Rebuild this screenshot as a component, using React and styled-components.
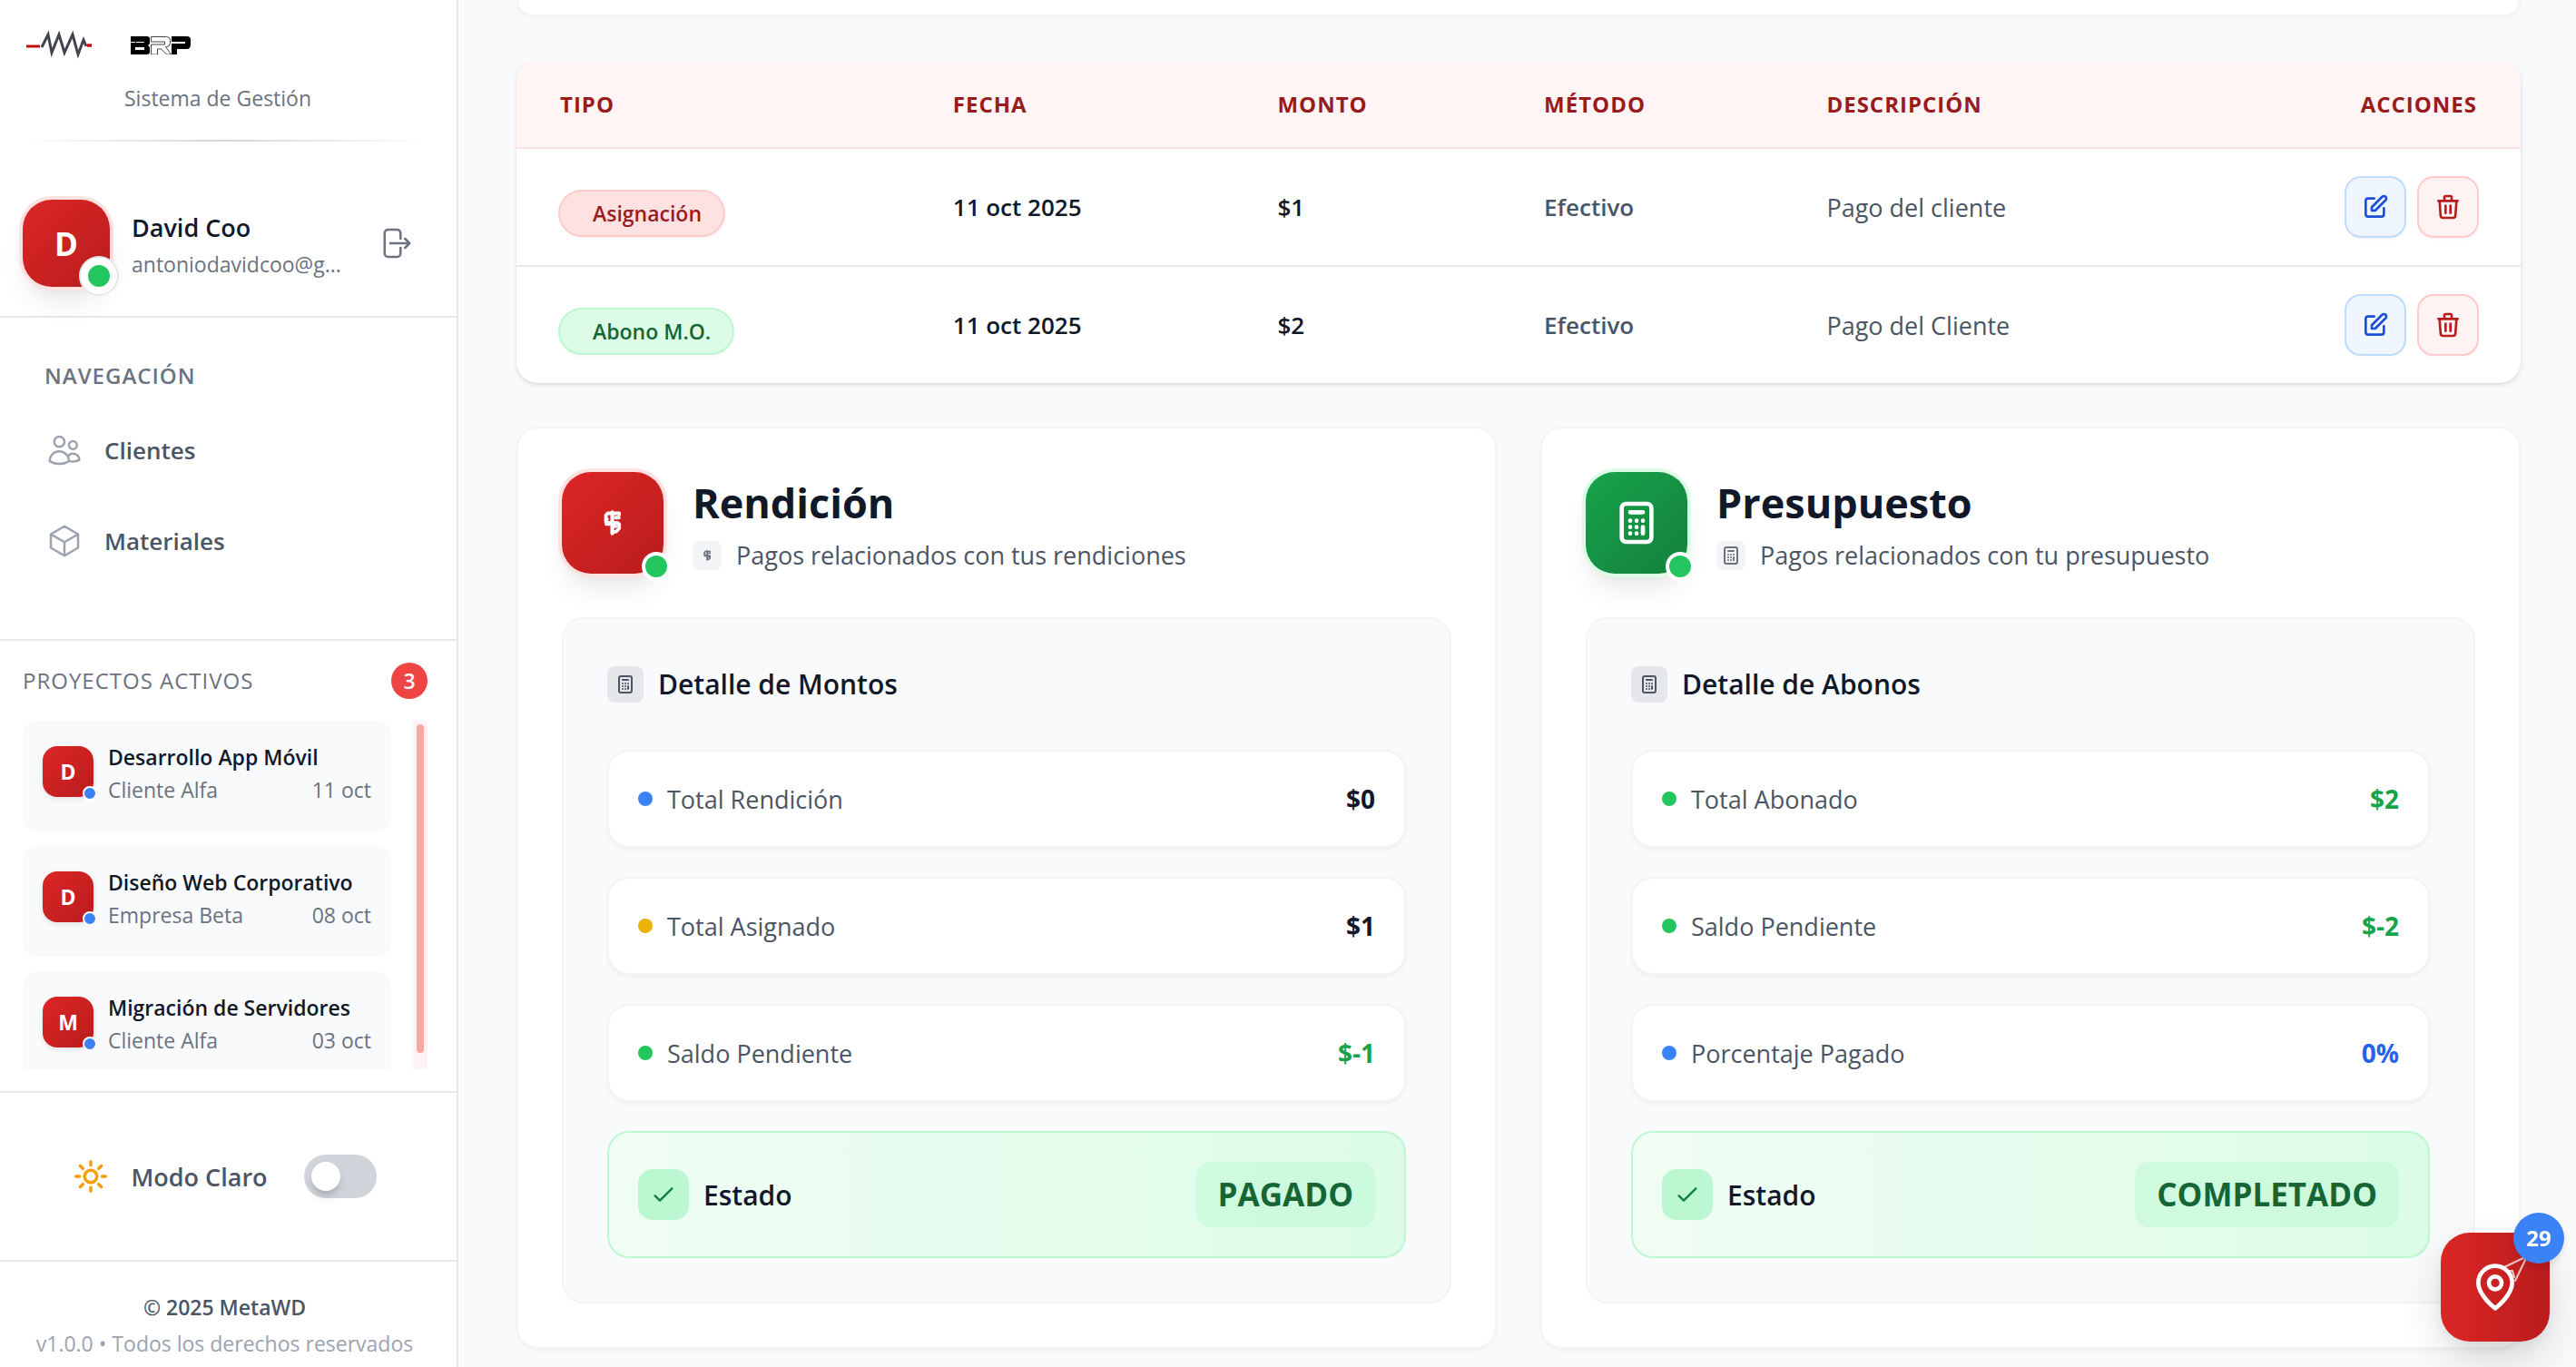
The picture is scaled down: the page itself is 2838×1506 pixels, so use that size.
import React from 'react';
import styled, { createGlobalStyle } from 'styled-components';

const Global = createGlobalStyle`
  *, *::before, *::after { box-sizing: border-box; }
  body {
    margin: 0;
    background: #f9fafc;
    font-family: 'Segoe UI', 'Open Sans', 'Noto Sans', sans-serif;
    color: #111827;
  }
  h1, h2, h3, p { margin: 0; }
  button { font: inherit; cursor: pointer; }
`;

/* ---------- shell ---------- */

const Shell = styled.div`
  display: flex;
  min-height: 100vh;
`;

const Sidebar = styled.aside`
  flex: 0 0 505px;
  min-width: 0;
  display: flex;
  flex-direction: column;
  background: #fff;
  border-right: 2px solid #e5e7eb;
`;

const Main = styled.main`
  flex: 1;
  min-width: 0;
  display: flex;
  flex-direction: column;
  gap: 48px;
  padding: 0 61px 20px 64px;
`;

/* ---------- sidebar ---------- */

const Brand = styled.header`
  padding: 24px 32px 0 25px;
`;

const BrandRow = styled.div`
  display: flex;
  gap: 32px;
`;

const BrandName = styled.div`
  display: flex;
  flex-direction: column;
  gap: 32px;
`;

const BrandText = styled.p`
  font-size: 23px;
  line-height: 32px;
  color: #6b7280;
`;

const FadeLine = styled.div`
  height: 2px;
  margin-top: 30px;
  background: linear-gradient(90deg, transparent, #d1d5db, transparent);
`;

const UserSection = styled.section`
  display: flex;
  align-items: center;
  gap: 24px;
  padding: 64px 36px 32px 25px;
  border-bottom: 2px solid #e5e7eb;
`;

const Tile = styled.div`
  position: relative;
  flex: none;
  display: grid;
  place-items: center;
  width: ${(p) => p.$size}px;
  height: ${(p) => p.$size}px;
  border-radius: ${(p) => p.$radius}px;
  background: linear-gradient(135deg, ${(p) => (p.$green ? '#16a34a, #15803d' : '#dc2626, #b91c1c')});
  box-shadow: ${(p) =>
    p.$ring
      ? `0 0 0 4px ${p.$green ? '#dcfce7' : '#fee2e2'}, 0 20px 30px -6px rgba(0,0,0,.1), 0 8px 12px -8px rgba(0,0,0,.1)`
      : '0 2px 6px rgba(0,0,0,.1)'};
  color: #fff;
  font-size: ${(p) => p.$text || 23}px;
  font-weight: 700;
  line-height: 1;
`;

const StatusDot = styled.span`
  position: absolute;
  right: ${(p) => p.$offset}px;
  bottom: ${(p) => p.$offset}px;
  width: ${(p) => p.$size}px;
  height: ${(p) => p.$size}px;
  border: ${(p) => p.$border}px solid #fff;
  border-radius: 50%;
  background: ${(p) => p.$color};
  box-shadow: ${(p) => (p.$outlined ? '0 0 0 2px #e5e7eb' : 'none')};
`;

const UserText = styled.div`
  flex: 1;
  min-width: 0;
  padding-top: 6px;
`;

const UserName = styled.h2`
  font-size: 27px;
  line-height: 40px;
  font-weight: 600;
`;

const UserMail = styled.p`
  font-size: 23px;
  line-height: 40px;
  color: #6b7280;
  white-space: nowrap;
`;

const PlainButton = styled.button`
  flex: none;
  display: grid;
  place-items: center;
  width: 64px;
  height: 64px;
  padding: 0;
  border: 0;
  border-radius: 16px;
  background: none;
  color: #6b7280;
`;

const Nav = styled.nav`
  padding: 48px 49px 66px;
  border-bottom: 2px solid #e5e7eb;
`;

const Overline = styled.h3`
  font-size: 24px;
  line-height: 32px;
  font-weight: ${(p) => p.$weight};
  letter-spacing: 1px;
  text-transform: uppercase;
  color: #6b7280;
`;

const NavList = styled.ul`
  display: flex;
  flex-direction: column;
  gap: 16px;
  margin: 24px 0 0;
  padding: 0 2px;
  list-style: none;
`;

const NavLink = styled.a`
  display: flex;
  align-items: center;
  gap: 24px;
  height: 84px;
  font-size: 26px;
  font-weight: 600;
  color: #4b5563;
  text-decoration: none;
  svg { color: #9ca3af; }
`;

const Projects = styled.section`
  padding: 24px 32px 24px 25px;
  border-bottom: 2px solid #e5e7eb;
`;

const ProjectsHead = styled.div`
  display: flex;
  align-items: center;
  justify-content: space-between;
`;

const CountBadge = styled.span`
  width: 40px;
  border-radius: 20px;
  background: #ef4444;
  color: #fff;
  font-size: 23px;
  font-weight: 600;
  line-height: 40px;
  text-align: center;
`;

const ProjectScroll = styled.div`
  display: flex;
  gap: 24px;
  height: 384px;
  margin-top: 24px;
  overflow: hidden;
`;

const ProjectList = styled.ul`
  flex: 1;
  min-width: 0;
  display: flex;
  flex-direction: column;
  gap: 16px;
  margin: 0;
  padding: 0;
  list-style: none;
`;

const Project = styled.li`
  display: flex;
  flex: none;
  gap: 16px;
  padding: 22px 22px 28px;
  border-radius: 16px;
  background: #f9fafc;
  ${Tile} { margin-top: 6px; }
`;

const ProjectText = styled.div`
  flex: 1;
  min-width: 0;
  font-size: 23px;
  line-height: 36px;
`;

const ProjectName = styled.p`
  font-weight: 600;
  white-space: nowrap;
`;

const ProjectMeta = styled.p`
  display: flex;
  justify-content: space-between;
  color: #6b7280;
`;

const ScrollTrack = styled.div`
  width: 16px;
  padding: 4px;
  background: #fef2f2;
`;

const ScrollThumb = styled.div`
  height: 362px;
  border-radius: 4px;
  background: #fca5a5;
`;

const ThemeRow = styled.label`
  display: flex;
  align-items: center;
  justify-content: center;
  gap: 24px;
  height: 186px;
  padding-right: 8px;
  border-bottom: 2px solid #e5e7eb;
  font-size: 27px;
  font-weight: 600;
  color: #4b5563;
  cursor: pointer;
`;

const Switch = styled.input`
  appearance: none;
  width: 80px;
  height: 48px;
  margin: 0 0 0 16px;
  padding: 8px;
  border-radius: 24px;
  background: #d1d5db;
  cursor: pointer;
  &::before {
    content: '';
    display: block;
    width: 32px;
    height: 32px;
    border-radius: 50%;
    background: #fff;
    box-shadow: 0 8px 12px -2px rgba(0, 0, 0, 0.14), 0 4px 6px -2px rgba(0, 0, 0, 0.1);
  }
  &:checked::before { margin-left: auto; }
`;

const Footer = styled.footer`
  padding: 30px 8px 0 0;
  font-size: 23px;
  line-height: 40px;
  text-align: center;
  color: #9ca3af;
`;

const Copyright = styled.p`
  font-weight: 600;
  color: #4b5563;
`;

/* ---------- payments table ---------- */

const CardTail = styled.div`
  height: 18px;
  border: 2px solid #f3f4f6;
  border-top: 0;
  border-radius: 0 0 24px 24px;
  background: #fff;
  box-shadow: 0 2px 4px rgba(0, 0, 0, 0.04);
`;

const TableCard = styled.section`
  border-radius: 24px;
  overflow: hidden;
  background: #fff;
  box-shadow: 0 2px 6px rgba(0, 0, 0, 0.1), 0 2px 4px -2px rgba(0, 0, 0, 0.1);
`;

const Table = styled.table`
  width: 100%;
  table-layout: fixed;
  border-collapse: separate;
  border-spacing: 0;
  font-size: 26px;
`;

const Th = styled.th`
  width: ${(p) => p.$width || 'auto'};
  height: 98px;
  padding: 0 48px;
  border-bottom: 2px solid #fee2e2;
  background: #fef5f4;
  color: #991b1b;
  font-size: 24px;
  font-weight: 700;
  letter-spacing: 1px;
  text-align: ${(p) => p.$align || 'left'};
  text-transform: uppercase;
`;

const Td = styled.td`
  height: 130px;
  padding: 0 48px;
  border-bottom: 2px solid #e5e7eb;
  color: ${(p) => (p.$muted ? '#4b5563' : '#111827')};
  font-size: ${(p) => (p.$weight === 400 ? 27 : 26)}px;
  font-weight: ${(p) => p.$weight || 600};
  tr:last-child > & {
    height: 128px;
    border-bottom: 0;
  }
`;

const Pill = styled.span`
  display: inline-block;
  margin-top: 14px;
  padding: 0 24px 0 36px;
  border-radius: 24px;
  font-size: 23px;
  line-height: 48px;
  font-weight: 600;
  color: ${(p) => (p.$green ? '#166534' : '#991b1b')};
  background: ${(p) => (p.$green ? '#dcfce7' : '#fee2e2')};
  box-shadow: 0 0 0 2px ${(p) => (p.$green ? '#bbf7d0' : '#fecaca')}, 0 3px 4px rgba(0, 0, 0, 0.06);
  vertical-align: middle;
`;

const Actions = styled.div`
  display: flex;
  justify-content: flex-end;
  gap: 16px;
`;

const ActionButton = styled.button`
  display: grid;
  place-items: center;
  width: 64px;
  height: 64px;
  padding: 0;
  border: 0;
  border-radius: 16px;
  color: ${(p) => (p.$danger ? '#b91c1c' : '#1d4ed8')};
  background: ${(p) => (p.$danger ? '#fef2f2' : '#eff6ff')};
  box-shadow: 0 0 0 2px ${(p) => (p.$danger ? '#fecaca' : '#bfdbfe')}, 0 3px 4px rgba(0, 0, 0, 0.05);
`;

/* ---------- summary cards ---------- */

const Cards = styled.div`
  display: grid;
  grid-template-columns: 1fr 1fr;
  gap: 48px;
`;

const Card = styled.section`
  display: flex;
  flex-direction: column;
  gap: 48px;
  padding: 48px;
  border: 2px solid #f3f4f6;
  border-radius: 24px;
  background: #fff;
  box-shadow: 0 2px 4px rgba(0, 0, 0, 0.04);
`;

const CardHead = styled.header`
  display: flex;
  align-items: center;
  gap: 32px;
`;

const CardTitles = styled.div`
  display: flex;
  flex-direction: column;
  gap: 12px;
`;

const CardTitle = styled.h1`
  font-size: 45px;
  line-height: 60px;
  font-weight: 700;
`;

const IconLine = styled.div`
  display: flex;
  align-items: center;
  gap: 16px;
  font-size: 27px;
  line-height: 32px;
  font-weight: 500;
  color: #4b5563;
`;

const Chip = styled.span`
  flex: none;
  display: grid;
  place-items: center;
  width: ${(p) => p.$size}px;
  height: ${(p) => p.$size}px;
  border-radius: ${(p) => p.$radius || 8}px;
  background: ${(p) => p.$bg};
  color: ${(p) => p.$color};
`;

const Panel = styled.div`
  padding: 48px;
  border: 2px solid #f3f4f6;
  border-radius: 24px;
  background: #f9fafc;
`;

const PanelTitle = styled.h2`
  display: flex;
  align-items: center;
  gap: 16px;
  margin-bottom: 48px;
  font-size: 30px;
  line-height: 48px;
  font-weight: 600;
`;

const Rows = styled.div`
  display: flex;
  flex-direction: column;
  gap: 32px;
`;

const Row = styled.div`
  display: flex;
  align-items: center;
  gap: 16px;
  min-height: ${(p) => (p.$status ? 140 : 108)}px;
  padding: 0 32px;
  border: 2px solid ${(p) => (p.$status ? '#bbf7d0' : '#f3f4f6')};
  border-radius: 24px;
  background: ${(p) => (p.$status ? 'linear-gradient(90deg, #f0fdf4, #dcfce7)' : '#fff')};
  box-shadow: ${(p) => (p.$status ? 'none' : '0 2px 4px rgba(0, 0, 0, 0.05)')};
`;

const Dot = styled.span`
  width: 16px;
  height: 16px;
  border-radius: 50%;
  background: ${(p) => p.$color};
`;

const RowLabel = styled.span`
  flex: 1;
  font-size: ${(p) => (p.$status ? 30 : 27)}px;
  font-weight: ${(p) => (p.$status ? 600 : 500)};
  color: ${(p) => (p.$status ? '#111827' : '#4b5563')};
`;

const RowValue = styled.span`
  font-size: 28px;
  font-weight: 700;
  color: ${(p) => p.$color || '#111827'};
`;

const StatusValue = styled.strong`
  padding: 0 24px;
  border-radius: 16px;
  background: rgba(187, 247, 208, 0.5);
  color: #166534;
  font-size: 35px;
  line-height: 72px;
  font-weight: 700;
`;

/* ---------- floating button ---------- */

const Fab = styled.button`
  position: fixed;
  right: 29px;
  bottom: 28px;
  width: 120px;
  height: 120px;
  padding: 0;
  border: 0;
  border-radius: 32px;
  background: linear-gradient(90deg, #dc2626, #b91c1c);
  box-shadow: 0 20px 50px -4px rgba(0, 0, 0, 0.16), 0 6px 16px rgba(0, 0, 0, 0.05);
  color: #fff;
  svg { display: block; }
`;

const FabBadge = styled.span`
  position: absolute;
  top: -22px;
  right: -16px;
  width: 56px;
  border-radius: 28px;
  background: #3b82f6;
  box-shadow: 0 6px 10px -2px rgba(0, 0, 0, 0.12);
  font-size: 24px;
  font-weight: 700;
  line-height: 56px;
  text-align: center;
`;

/* ---------- icons ---------- */

const Icon = ({ size = 40, stroke = 1.5, box = '0 0 24 24', children }) => (
  <svg width={size} height={size} viewBox={box} fill="none" stroke="currentColor"
    strokeWidth={stroke} strokeLinecap="round" strokeLinejoin="round" aria-hidden="true">
    {children}
  </svg>
);

const WaveLogo = () => (
  <svg width="80" height="52" viewBox="0 0 80 52" fill="none" aria-hidden="true">
    <path d="M4 27h15" stroke="#c00d0d" strokeWidth="3" />
    <path d="M71 26h5" stroke="#c00d0d" strokeWidth="3.4" />
    <path d="M21 28l7-14 4 20 8-20 6 20 9-20 6 22 6-16 3 7" stroke="#41434f" strokeWidth="3" />
  </svg>
);

const BrpLogo = () => (
  <svg width="80" height="36" viewBox="0 0 80 36" role="img" aria-label="BRP">
    <path fillRule="evenodd" fill="#000" d="M7 16h18q3 0 3 3v4q0 2-2 3 2 1 2 3v4q0 3-3 3H7V23h5v-1H7zM13 22v1h9v-1zM12 28v3h10v-3z" />
    <path d="M29.500 16.500h17q4 0 4 4v3q0 4-4 4h-1l6 8.500h-5l-6-6h-4v6h-7V25h15v-3h-15z" fill="#fff" stroke="#444" strokeWidth="1" />
    <path fillRule="evenodd" fill="#000" d="M52 16h17q4 0 4 4v5q0 5-4 5H58v6h-6V24h15v-2H52z" />
  </svg>
);

const LogoutIcon = () => (
  <Icon><path d="M15.750 9V5.250A2.250 2.250 0 0 0 13.500 3h-6a2.250 2.250 0 0 0-2.250 2.250v13.500A2.250 2.250 0 0 0 7.500 21h6a2.250 2.250 0 0 0 2.250-2.250V15m3 0 3-3m0 0-3-3m3 3H9" /></Icon>
);

const UsersIcon = () => (
  <Icon><path d="M15 19.128a9.380 9.380 0 0 0 2.625.372 9.337 9.337 0 0 0 4.121-.952 4.125 4.125 0 0 0-7.533-2.493M15 19.128v-.003c0-1.113-.285-2.160-.786-3.070M15 19.128v.106A12.318 12.318 0 0 1 8.624 21c-2.331 0-4.512-.645-6.374-1.766l-.001-.109a6.375 6.375 0 0 1 11.964-3.070M12 6.375a3.375 3.375 0 1 1-6.750 0 3.375 3.375 0 0 1 6.750 0Zm8.250 2.250a2.625 2.625 0 1 1-5.250 0 2.625 2.625 0 0 1 5.250 0Z" /></Icon>
);

const CubeIcon = () => (
  <Icon><path d="m21 7.500-9-5.250L3 7.500m18 0-9 5.250m9-5.250v9l-9 5.250M3 7.500l9 5.250M3 7.500v9l9 5.250m0-9v9" /></Icon>
);

const SunIcon = () => (
  <Icon stroke={1.9} box="1 1 22 22"><path stroke="#f59e0b" d="M12 3v2.250m6.364.386-1.591 1.591M21 12h-2.250m-.386 6.364-1.591-1.591M12 18.750V21m-4.773-4.227-1.591 1.591M5.250 12H3m4.227-4.773L5.636 5.636M15.750 12a3.750 3.750 0 1 1-7.500 0 3.750 3.750 0 0 1 7.500 0Z" /></Icon>
);

const EditIcon = () => (
  <Icon size={32} stroke={2}><path d="M11 5H6a2 2 0 0 0-2 2v11a2 2 0 0 0 2 2h11a2 2 0 0 0 2-2v-5m-1.414-9.414a2 2 0 1 1 2.828 2.828L11.828 15H9v-2.828l8.586-8.586z" /></Icon>
);

const TrashIcon = () => (
  <Icon size={32} stroke={2}><path d="m19 7-.867 12.142A2 2 0 0 1 16.138 21H7.862a2 2 0 0 1-1.995-1.858L5 7m5 4v6m4-6v6m1-10V4a1 1 0 0 0-1-1h-4a1 1 0 0 0-1 1v3M4 7h16" /></Icon>
);

const CheckIcon = () => (
  <Icon size={32} stroke={1.8}><path d="m5 13 4 4L19 7" /></Icon>
);

const CalculatorIcon = ({ size }) => (
  <Icon size={size} stroke={2}>
    <path d="M9 7h6m0 10v-3m-3 3h.01M9 17h.01M9 14h.01M12 14h.01M15 11h.01M12 11h.01M9 11h.01M7 21h10a2 2 0 0 0 2-2V5a2 2 0 0 0-2-2H7a2 2 0 0 0-2 2v14a2 2 0 0 0 2 2z" />
  </Icon>
);

const MoneyIcon = ({ height }) => (
  <svg width={(height * 60) / 88} height={height} viewBox="0 0 60 88" fill="none" stroke="currentColor"
    strokeWidth="12" strokeLinecap="round" strokeLinejoin="round" aria-hidden="true">
    <path d="M30 7v74" strokeWidth="13" />
    <path d="M53 11H14L8 18v10l4 4M8 28v12l6 4h34l6 5v14l-10 11-8 1M42 26h11M54 11v4M9 48h12M34 56h8" />
  </svg>
);

const LocationIcon = () => (
  <svg width="120" height="120" viewBox="0 0 120 120" fill="none" stroke="currentColor"
    strokeLinecap="round" strokeLinejoin="round" aria-hidden="true">
    <path d="M70 38 95 26 82 53M75 42l4 0 2 7" strokeWidth="2" opacity=".75" />
    <g transform="translate(32 32) scale(2.333)" strokeWidth="2">
      <circle cx="12" cy="10" r="3" />
      <path d="M20 10c0 6-8 12-8 12s-8-6-8-12a8 8 0 0 1 16 0Z" />
    </g>
  </svg>
);

/* ---------- data ---------- */

const projects = [
  { name: 'Desarrollo App Móvil', client: 'Cliente Alfa', date: '11 oct' },
  { name: 'Diseño Web Corporativo', client: 'Empresa Beta', date: '08 oct' },
  { name: 'Migración de Servidores', client: 'Cliente Alfa', date: '03 oct' },
];

const payments = [
  { type: 'Asignación', date: '11 oct 2025', amount: '$1', method: 'Efectivo', note: 'Pago del cliente' },
  { type: 'Abono M.O.', green: true, date: '11 oct 2025', amount: '$2', method: 'Efectivo', note: 'Pago del Cliente' },
];

const BLUE = '#3b82f6';
const GREEN = '#22c55e';
const YELLOW = '#eab308';

const summaries = [
  {
    title: 'Rendición',
    subtitle: 'Pagos relacionados con tus rendiciones',
    detail: 'Detalle de Montos',
    rows: [
      { dot: BLUE, label: 'Total Rendición', value: '$0' },
      { dot: YELLOW, label: 'Total Asignado', value: '$1' },
      { dot: GREEN, label: 'Saldo Pendiente', value: '$-1', color: '#16a34a' },
    ],
    status: 'PAGADO',
  },
  {
    title: 'Presupuesto',
    green: true,
    subtitle: 'Pagos relacionados con tu presupuesto',
    detail: 'Detalle de Abonos',
    rows: [
      { dot: GREEN, label: 'Total Abonado', value: '$2', color: '#16a34a' },
      { dot: GREEN, label: 'Saldo Pendiente', value: '$-2', color: '#16a34a' },
      { dot: BLUE, label: 'Porcentaje Pagado', value: '0%', color: '#2563eb' },
    ],
    status: 'COMPLETADO',
  },
];

/* ---------- views ---------- */

const SummaryCard = ({ data }) => (
  <Card>
    <CardHead>
      <Tile $size={112} $radius={32} $ring $green={data.green}>
        {data.green ? <CalculatorIcon size={56} /> : <MoneyIcon height={28} />}
        <StatusDot $size={32} $border={4} $offset={-8} $color={GREEN} />
      </Tile>
      <CardTitles>
        <CardTitle>{data.title}</CardTitle>
        <IconLine>
          <Chip $size={32} $bg="#f3f4f6" $color="#6b7280">
            {data.green ? <CalculatorIcon size={24} /> : <MoneyIcon height={12} />}
          </Chip>
          {data.subtitle}
        </IconLine>
      </CardTitles>
    </CardHead>
    <Panel>
      <PanelTitle>
        <Chip $size={40} $bg="#e5e7eb" $color="#4b5563"><CalculatorIcon size={24} /></Chip>
        {data.detail}
      </PanelTitle>
      <Rows>
        {data.rows.map((row) => (
          <Row key={row.label}>
            <Dot $color={row.dot} />
            <RowLabel>{row.label}</RowLabel>
            <RowValue $color={row.color}>{row.value}</RowValue>
          </Row>
        ))}
        <Row $status>
          <Chip $size={56} $radius={16} $bg="#bbf7d0" $color="#15803d"><CheckIcon /></Chip>
          <RowLabel $status>Estado</RowLabel>
          <StatusValue>{data.status}</StatusValue>
        </Row>
      </Rows>
    </Panel>
  </Card>
);

export default function App() {
  return (
    <Shell>
      <Global />
      <Sidebar>
        <Brand>
          <BrandRow>
            <WaveLogo />
            <BrandName>
              <BrpLogo />
              <BrandText>Sistema de Gestión</BrandText>
            </BrandName>
          </BrandRow>
          <FadeLine />
        </Brand>

        <UserSection>
          <Tile $size={96} $radius={32} $ring $text={35}>
            D
            <StatusDot $size={40} $border={8} $offset={-8} $color={GREEN} $outlined />
          </Tile>
          <UserText>
            <UserName>David Coo</UserName>
            <UserMail>antoniodavidcoo@g...</UserMail>
          </UserText>
          <PlainButton type="button" aria-label="Cerrar sesión"><LogoutIcon /></PlainButton>
        </UserSection>

        <Nav>
          <Overline $weight={600}>Navegación</Overline>
          <NavList>
            <li><NavLink href="#clientes"><UsersIcon />Clientes</NavLink></li>
            <li><NavLink href="#materiales"><CubeIcon />Materiales</NavLink></li>
          </NavList>
        </Nav>

        <Projects>
          <ProjectsHead>
            <Overline $weight={500}>Proyectos activos</Overline>
            <CountBadge>3</CountBadge>
          </ProjectsHead>
          <ProjectScroll>
            <ProjectList>
              {projects.map((p) => (
                <Project key={p.name}>
                  <Tile $size={56} $radius={16}>
                    {p.name[0]}
                    <StatusDot $size={16} $border={2} $offset={-4} $color={BLUE} />
                  </Tile>
                  <ProjectText>
                    <ProjectName>{p.name}</ProjectName>
                    <ProjectMeta><span>{p.client}</span><span>{p.date}</span></ProjectMeta>
                  </ProjectText>
                </Project>
              ))}
            </ProjectList>
            <ScrollTrack><ScrollThumb /></ScrollTrack>
          </ProjectScroll>
        </Projects>

        <ThemeRow>
          <SunIcon />
          Modo Claro
          <Switch type="checkbox" role="switch" />
        </ThemeRow>

        <Footer>
          <Copyright>© 2025 MetaWD</Copyright>
          <p>v1.0.0 • Todos los derechos reservados</p>
        </Footer>
      </Sidebar>

      <Main>
        <CardTail />
        <TableCard>
          <Table>
            <thead>
              <tr>
                <Th $width="19.6%">Tipo</Th>
                <Th $width="16.2%">Fecha</Th>
                <Th $width="13.3%">Monto</Th>
                <Th $width="14.1%">Método</Th>
                <Th>Descripción</Th>
                <Th $width="16%" $align="right">Acciones</Th>
              </tr>
            </thead>
            <tbody>
              {payments.map((p) => (
                <tr key={p.type}>
                  <Td><Pill $green={p.green}>{p.type}</Pill></Td>
                  <Td>{p.date}</Td>
                  <Td>{p.amount}</Td>
                  <Td $muted>{p.method}</Td>
                  <Td $muted $weight={400}>{p.note}</Td>
                  <Td>
                    <Actions>
                      <ActionButton type="button" aria-label="Editar"><EditIcon /></ActionButton>
                      <ActionButton type="button" aria-label="Eliminar" $danger><TrashIcon /></ActionButton>
                    </Actions>
                  </Td>
                </tr>
              ))}
            </tbody>
          </Table>
        </TableCard>
        <Cards>
          {summaries.map((s) => <SummaryCard key={s.title} data={s} />)}
        </Cards>
      </Main>

      <Fab type="button" aria-label="Ubicaciones">
        <LocationIcon />
        <FabBadge>29</FabBadge>
      </Fab>
    </Shell>
  );
}
